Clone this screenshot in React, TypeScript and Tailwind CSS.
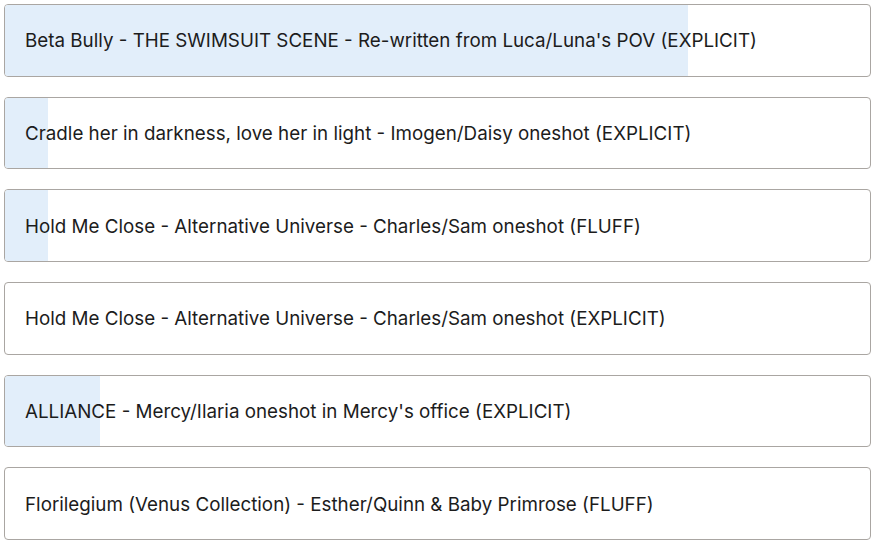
const stories = [
  { title: "Beta Bully - THE SWIMSUIT SCENE - Re-written from Luca/Luna's POV (EXPLICIT)", progress: 79 },
  { title: 'Cradle her in darkness, love her in light - Imogen/Daisy oneshot (EXPLICIT)', progress: 5 },
  { title: 'Hold Me Close - Alternative Universe - Charles/Sam oneshot (FLUFF)', progress: 5 },
  { title: 'Hold Me Close - Alternative Universe - Charles/Sam oneshot (EXPLICIT)', progress: 0 },
  { title: "ALLIANCE - Mercy/Ilaria oneshot in Mercy's office (EXPLICIT)", progress: 11 },
  { title: 'Florilegium (Venus Collection) - Esther/Quinn & Baby Primrose (FLUFF)', progress: 0 },
]

export default function App() {
  return (
    <div className="min-h-screen bg-white px-1 pt-1 font-['Inter',sans-serif]">
      <div className="flex flex-col gap-[20.2px] w-[867px]">
        {stories.map((s, i) => (
          <div key={i} className="relative h-[72.5px] rounded border border-[#aaa6a2] bg-white overflow-hidden flex items-center">
            <div className="absolute inset-y-0 left-0 bg-[#e2eefa]" style={{ width: `${s.progress}%` }} />
            <span className="relative pl-5 pt-[2px] text-[18.8px] text-[#1c1c1c]">{s.title}</span>
          </div>
        ))}
      </div>
    </div>
  )
}
